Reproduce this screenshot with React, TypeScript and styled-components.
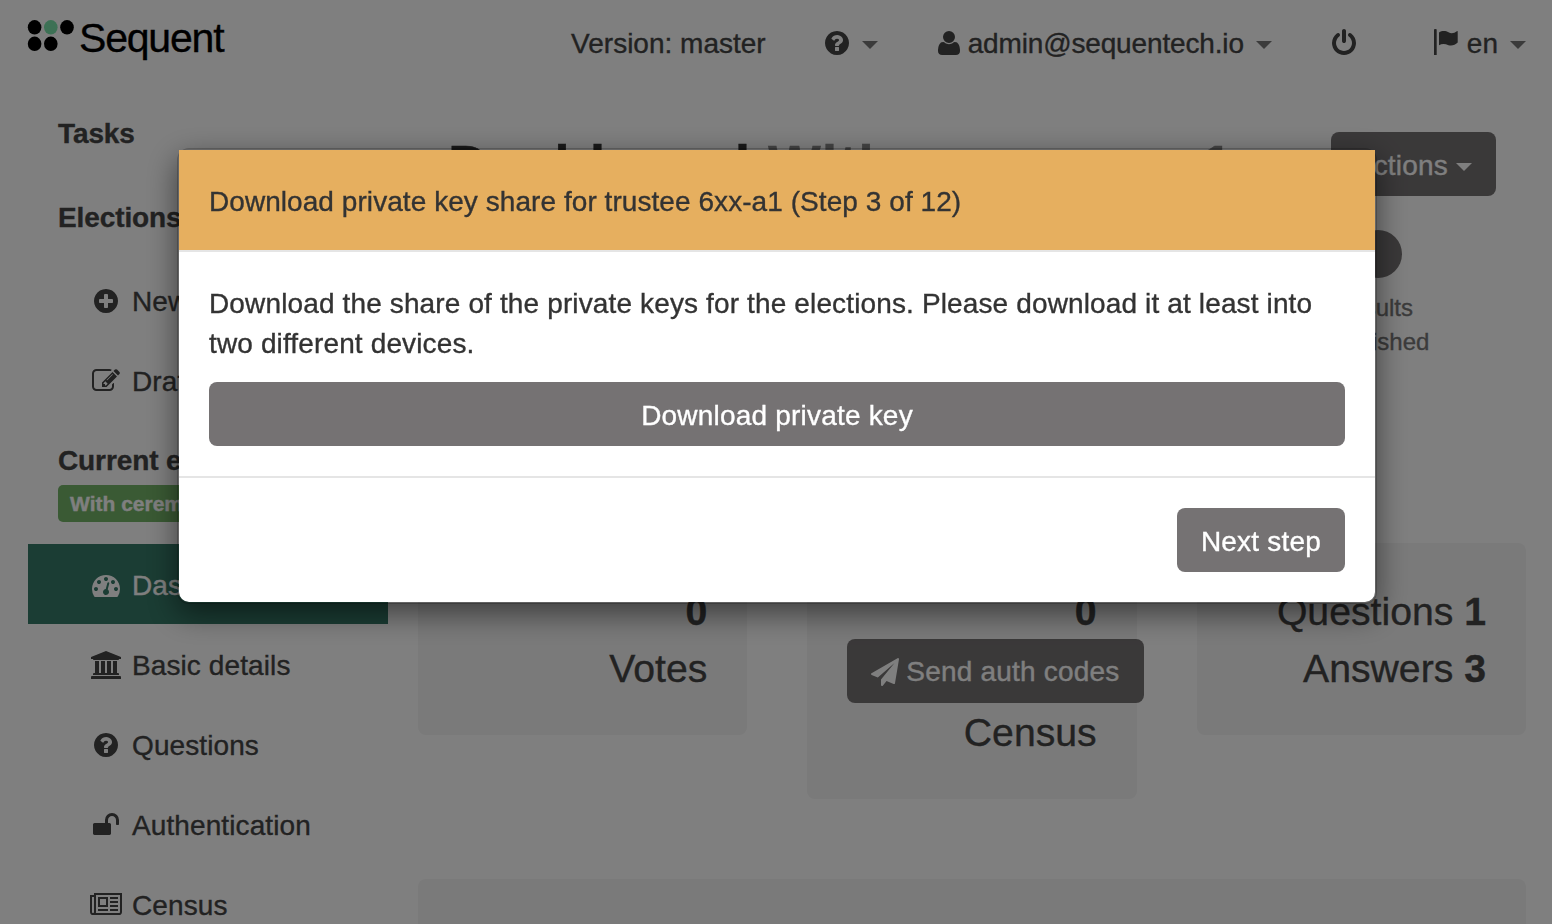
import React from "react";
import styled, { createGlobalStyle } from "styled-components";

const GlobalStyle = createGlobalStyle`
  *, *::before, *::after { box-sizing: border-box; }
  body {
    margin: 0;
    background: #fff;
    color: #444;
    font-family: "Liberation Sans", Arial, Helvetica, sans-serif;
    font-size: 28px;
    line-height: 40px;
    overflow: hidden;
    -webkit-text-stroke: 0.35px currentColor;
  }
`;

const icons = {
  question: {
    w: 1792,
    d: "M1024 1376v-192q0-14-9-23t-23-9h-192q-14 0-23 9t-9 23v192q0 14 9 23t23 9h192q14 0 23-9t9-23zm256-672q0-88-55.500-163t-138.500-116-170-41q-243 0-371 213-15 24 8 42l132 100q7 6 19 6 16 0 25-12 53-68 86-92 34-24 86-24 48 0 85.500 26t37.500 59q0 38-20 61t-68 45q-63 28-115.500 86.500t-52.500 125.500v36q0 14 9 23t23 9h192q14 0 23-9t9-23q0-19 21.500-49.500t54.500-49.500q32-18 49-28.500t46-35 44.500-48 28-60.500 12.500-81zm384 192q0 209-103 385.500t-279.500 279.500-385.500 103-385.500-103-279.500-279.500-103-385.500 103-385.500 279.500-279.500 385.500-103 385.500 103 279.500 279.500 103 385.500z",
  },
  user: {
    w: 1792,
    d: "M1600 1405q0 120-73 189.500t-194 69.500h-874q-121 0-194-69.500t-73-189.500q0-53 3.500-103.500t14-109 26.500-108.500 43-97.500 62-81 85.500-53.500 111.500-20q9 0 42 21.500t74.500 48 108 48 133.500 21.500 133.500-21.500 108-48 74.500-48 42-21.500q61 0 111.500 20t85.500 53.500 62 81 43 97.500 26.500 108.500 14 109 3.500 103.500zm-320-893q0 159-112.500 271.500t-271.500 112.500-271.500-112.500-112.500-271.500 112.500-271.500 271.500-112.500 271.500 112.500 112.500 271.500z",
  },
  power: {
    w: 1792,
    d: "M1664 896q0 156-61 298t-164 245-245 164-298 61-298-61-245-164-164-245-61-298q0-182 80.500-343t226.500-270q43-32 95.500-25t83.500 50q32 42 24.500 94.500t-49.500 84.500q-98 74-151.500 181t-53.500 228q0 104 40.500 198.500t109.500 163.500 163.500 109.500 198.500 40.500 198.500-40.500 163.500-109.500 109.500-163.500 40.500-198.500q0-121-53.500-228t-151.500-181q-42-32-49.500-84.500t24.500-94.500q31-43 84-50t95 25q146 109 226.500 270t80.500 343zm-640-768v640q0 52-38 90t-90 38-90-38-38-90v-640q0-52 38-90t90-38 90 38 38 90z",
  },
  plus: {
    w: 1792,
    d: "M1344 960v-128q0-26-19-45t-45-19h-256v-256q0-26-19-45t-45-19h-128q-26 0-45 19t-19 45v256h-256q-26 0-45 19t-19 45v128q0 26 19 45t45 19h256v256q0 26 19 45t45 19h128q26 0 45-19t19-45v-256h256q26 0 45-19t19-45zm320-64q0 209-103 385.500t-279.500 279.500-385.500 103-385.500-103-279.500-279.500-103-385.500 103-385.500 279.500-279.500 385.500-103 385.500 103 279.500 279.500 103 385.500z",
  },
  edit: {
    w: 1792,
    d: "M888 1184l116-116-152-152-116 116v56h96v96h56zm440-720q-16-16-33 1l-350 350q-17 17-1 33t33-1l350-350q17-17 1-33zm80 594v190q0 119-84.500 203.500t-203.500 84.500h-832q-119 0-203.500-84.500t-84.500-203.500v-832q0-119 84.500-203.500t203.500-84.500h832q63 0 117 25 15 7 18 23 3 17-9 29l-49 49q-14 14-32 8-23-6-45-6h-832q-66 0-113 47t-47 113v832q0 66 47 113t113 47h832q66 0 113-47t47-113v-126q0-13 9-22l64-64q15-15 35-7t20 29zm-96-738l288 288-672 672h-288v-288zm444 132l-92 92-288-288 92-92q28-28 68-28t68 28l152 152q28 28 28 68t-28 68z",
  },
  gauge: {
    w: 1792,
    d: "M384 1152q0-53-37.500-90.500t-90.500-37.500-90.500 37.500-37.500 90.500 37.500 90.500 90.500 37.500 90.500-37.500 37.500-90.500zm192-448q0-53-37.500-90.500t-90.500-37.500-90.500 37.500-37.500 90.500 37.500 90.500 90.500 37.500 90.500-37.500 37.500-90.500zm428 481l101-382q6-26-7.500-48.500t-38.500-29.500-48 6.500-30 39.500l-101 382q-60 5-107 43.500t-63 98.500q-20 77 20 146t117 89 146-20 89-117q16-60-6-117t-72-91zm660-33q0-53-37.500-90.500t-90.500-37.500-90.500 37.500-37.500 90.500 37.500 90.500 90.500 37.500 90.500-37.500 37.500-90.500zm-640-640q0-53-37.500-90.500t-90.500-37.500-90.500 37.500-37.500 90.500 37.500 90.500 90.500 37.500 90.500-37.500 37.500-90.500zm448 192q0-53-37.500-90.500t-90.500-37.500-90.500 37.500-37.500 90.500 37.500 90.500 90.500 37.500 90.500-37.500 37.500-90.500zm320 448q0 261-141 483-19 29-54 29h-1402q-35 0-54-29-141-221-141-483 0-182 71-348t191-286 286-191 348-71 348 71 286 191 191 286 71 348z",
  },
  bank: {
    w: 1920,
    d: "M960 0l960 384v128h-128q0 26-20.500 45t-48.500 19h-1526q-28 0-48.500-19t-20.500-45h-128v-128zm-704 640h256v768h128v-768h256v768h128v-768h256v768h128v-768h256v768h59q28 0 48.500 19t20.500 45v64h-1664v-64q0-26 20.500-45t48.500-19h59v-768zm1595 960q28 0 48.500 19t20.500 45v128h-1920v-128q0-26 20.500-45t48.500-19h1782z",
  },
  unlock: {
    w: 1792,
    d: "M1728 576v256q0 26-19 45t-45 19h-64q-26 0-45-19t-19-45v-256q0-106-75-181t-181-75-181 75-75 181v192h96q40 0 68 28t28 68v576q0 40-28 68t-68 28h-960q-40 0-68-28t-28-68v-576q0-40 28-68t68-28h672v-192q0-185 131.500-316.500t316.500-131.500 316.500 131.500 131.500 316.500z",
  },
  news: {
    w: 2048,
    d: "M1024 512h-384v384h384v-384zm128 640v128h-640v-128h640zm0-768v640h-640v-640h640zm640 768v128h-512v-128h512zm0-256v128h-512v-128h512zm0-256v128h-512v-128h512zm0-256v128h-512v-128h512zm-1536 960v-960h-128v960q0 26 19 45t45 19 45-19 19-45zm1664 0v-1088h-1536v1088q0 33-11 64h1483q26 0 45-19t19-45zm128-1216v1216q0 80-56 136t-136 56h-1664q-80 0-136-56t-56-136v-1088h256v-128h1792z",
  },
  plane: {
    w: 1792,
    d: "M1764 11q33 24 27 64l-256 1536q-5 29-32 45-14 8-31 8-11 0-24-5l-453-185-242 295q-18 23-49 23-13 0-22-4-19-7-30.500-23.500t-11.500-36.500v-349l864-1059-1069 925-395-162q-37-14-40-55-2-40 32-59l1664-960q15-9 32-9 20 0 36 11z",
  },
};

type IconName = keyof typeof icons;

const Glyph = styled.svg`
  display: block;
  flex: none;
  fill: currentColor;
`;

const Icon = ({ name }: { name: IconName }) => (
  <Glyph width={icons[name].w / 64} height={28} viewBox={`0 0 ${icons[name].w} 1792`} aria-hidden>
    <path d={icons[name].d} />
  </Glyph>
);

const FlagIcon = () => (
  <Glyph width={24} height={28} viewBox="0 0 24 28" aria-hidden>
    <path d="M0 0.6Q0 0 1.350 0Q2.700 0 2.700 0.600V26H0Z" />
    <path d="M5 3.500C8 1.300 12 1.700 14.500 3.300C17.500 5 20.500 4 22.800 2.200Q23.700 1.500 23.700 2.500V13.600C21 16 18 17.300 14.500 16.200C11 14.600 8 14.300 5 16.300Z" />
  </Glyph>
);

const Page = styled.div`
  height: 924px;
  overflow: hidden;
`;

const Navbar = styled.header`
  display: flex;
  align-items: flex-start;
  height: 93px;
  padding: 18px 26px 0 27px;
`;

const Logo = styled.div`
  display: flex;
  color: #000;
  font-size: 41px;
  letter-spacing: -1.2px;
  margin-right: auto;
`;

const LogoDots = styled.svg`
  display: block;
  margin-right: 4px;
`;

const NavItem = styled.div<{ $before?: number; $gap?: number; $tracking?: number }>`
  display: flex;
  align-items: center;
  height: 40px;
  margin-top: 6px;
  margin-left: ${(p) => p.$before ?? 0}px;
  gap: ${(p) => p.$gap ?? 0}px;
  letter-spacing: ${(p) => p.$tracking ?? 0}px;
  white-space: nowrap;

  > svg { margin-bottom: 2px; }
`;

const Caret = styled.span<{ $light?: boolean; $space?: number }>`
  width: 0;
  height: 0;
  margin-left: ${(p) => p.$space ?? 12}px;
  margin-top: 2px;
  border: 8px solid transparent;
  border-top-color: ${(p) => (p.$light ? "#fff" : "#777")};
  border-bottom: 0;
`;

const Columns = styled.div`
  display: flex;
  padding: 0 26px 0 28px;
`;

const Sidebar = styled.nav`
  width: 360px;
  margin-right: 30px;
  padding-top: 21px;
`;

const SideHeading = styled.h2<{ $below: number }>`
  margin: 0 0 ${(p) => p.$below}px;
  padding-left: 30px;
  font-size: 28px;
  line-height: 40px;
  letter-spacing: -0.1px;
  white-space: nowrap;
`;

const SideList = styled.div`
  display: flex;
  flex-direction: column;
  margin-bottom: 20px;
`;

const SideItem = styled.div<{ $active?: boolean; $low?: boolean }>`
  display: flex;
  align-items: center;
  height: 80px;
  padding-left: 60px;
  padding-top: ${(p) => (p.$low ? 2 : 0)}px;
  gap: 8px;
  background: ${(p) => (p.$active ? "#367a68" : "transparent")};
  color: ${(p) => (p.$active ? "#fff" : "inherit")};
`;

const SideLabel = styled.span`
  padding-top: 2px;
  letter-spacing: 0.1px;
`;

const IconSlot = styled.span`
  display: flex;
  justify-content: center;
  width: 36px;
`;

const ElectionBadge = styled.div`
  width: max-content;
  height: 37px;
  margin: 0 0 22px 30px;
  padding: 0 12px;
  border-radius: 5px;
  background: #74b468;
  color: #fff;
  font-size: 21px;
  font-weight: 700;
  line-height: 37px;
`;

const Content = styled.main`
  flex: 1;
  padding-top: 39px;
`;

const TitleRow = styled.div`
  display: flex;
  align-items: center;
  justify-content: space-between;
  height: 64px;
  padding: 0 30px;
`;

const Title = styled.h1`
  margin: 0;
  padding-top: 2px;
  font-size: 56px;
  line-height: 62px;
  letter-spacing: 1.2px;
  white-space: nowrap;
  color: #333;
`;

const TitleName = styled.span`
  color: #888;
`;

const Button = styled.button<{ $wide?: boolean }>`
  display: flex;
  align-items: center;
  justify-content: center;
  width: ${(p) => (p.$wide ? "100%" : "max-content")};
  height: 64px;
  padding: 3px 24px 0;
  gap: 7px;
  border: 0;
  border-radius: 8px;
  background: #757273;
  color: #fff;
  font: inherit;
  letter-spacing: 0.2px;
  white-space: nowrap;
`;

const Progress = styled.div`
  display: flex;
  justify-content: flex-end;
  height: 313px;
  margin-top: 34px;
  padding-right: 88px;
`;

const Stage = styled.div`
  display: flex;
  flex-direction: column;
  align-items: center;
  width: 120px;
  color: #777;
  font-size: 24px;
  line-height: 34px;
`;

const StageDot = styled.span`
  width: 48px;
  height: 48px;
  margin-bottom: 13px;
  border-radius: 50%;
  background: #757273;
`;

const StageLine = styled.span<{ $inset?: number }>`
  padding-right: ${(p) => p.$inset ?? 0}px;
`;

const Cards = styled.div`
  display: grid;
  grid-template-columns: repeat(3, minmax(0, 1fr));
  align-items: start;
  gap: 60px;
  margin-bottom: 80px;
`;

const Card = styled.section`
  padding: 40px 40px 38px;
  border-radius: 8px;
  background: #f4f4f4;
  font-size: 39.2px;
  line-height: 57px;
  text-align: right;
`;

const CardButton = styled(Button)`
  margin: -1px 0 1px;
  padding-top: 1px;
  font-size: 28px;
`;

const Panel = styled.section`
  height: 200px;
  border-radius: 8px;
  background: #f4f4f4;
`;

const Backdrop = styled.div`
  position: fixed;
  inset: 0;
  padding: 148px 175px 0 177px;
  background: rgba(0, 0, 0, 0.5);
`;

const Dialog = styled.div`
  border: 2px solid rgba(0, 0, 0, 0.2);
  border-radius: 12px;
  background: #fff;
  background-clip: padding-box;
  box-shadow: 0 10px 30px rgba(0, 0, 0, 0.5);
  color: #333;
`;

const DialogHeader = styled.div`
  height: 102px;
  padding: 32px 30px 0;
  border-bottom: 2px solid #e5e5e5;
  background: #e6af5f;
  letter-spacing: 0.06px;
`;

const DialogBody = styled.div`
  padding: 32px 30px 30px;
`;

const DialogText = styled.p`
  margin: 0 0 18px;
  letter-spacing: 0.135px;
`;

const DialogFooter = styled.div`
  display: flex;
  justify-content: flex-end;
  padding: 30px;
  border-top: 2px solid #e5e5e5;
`;

type SideLinkProps = { icon: IconName; label: string; active?: boolean; low?: boolean };

const SideLink = ({ icon, label, active, low }: SideLinkProps) => (
  <SideItem $active={active} $low={low}>
    <IconSlot>
      <Icon name={icon} />
    </IconSlot>
    <SideLabel>{label}</SideLabel>
  </SideItem>
);

export default function App() {
  return (
    <>
      <GlobalStyle />
      <Page>
        <Navbar>
          <Logo>
            <LogoDots width="48" height="36" viewBox="0 0 48 36" aria-hidden>
              <ellipse cx="7.600" cy="9.300" rx="6.800" ry="7.200" />
              <ellipse cx="23.800" cy="9.300" rx="6.800" ry="7.200" fill="#7be3ab" />
              <ellipse cx="40" cy="9.300" rx="6.800" ry="7.200" />
              <ellipse cx="7.600" cy="25.800" rx="6.800" ry="7.200" />
              <ellipse cx="23.800" cy="25.800" rx="6.800" ry="7.200" />
            </LogoDots>
            Sequent
          </Logo>
          <NavItem>Version: master</NavItem>
          <NavItem $before={57}>
            <Icon name="question" />
            <Caret $space={11} />
          </NavItem>
          <NavItem $before={57} $gap={5} $tracking={-0.15}>
            <Icon name="user" />
            admin@sequentech.io
            <Caret $space={7} />
          </NavItem>
          <NavItem $before={58}>
            <Icon name="power" />
          </NavItem>
          <NavItem $before={76}>
            <FlagIcon />
          </NavItem>
          <NavItem $before={9}>
            en
            <Caret />
          </NavItem>
        </Navbar>
        <Columns>
          <Sidebar>
            <SideHeading $below={44}>Tasks</SideHeading>
            <SideHeading $below={23}>Elections</SideHeading>
            <SideList>
              <SideLink icon="plus" label="New" />
              <SideLink icon="edit" label="Drafts" />
            </SideList>
            <SideHeading $below={4}>Current election</SideHeading>
            <ElectionBadge>With ceremony 1</ElectionBadge>
            <SideList>
              <SideLink icon="gauge" label="Dashboard" active low />
              <SideLink icon="bank" label="Basic details" low />
              <SideLink icon="question" label="Questions" low />
              <SideLink icon="unlock" label="Authentication" low />
              <SideLink icon="news" label="Census" low />
            </SideList>
          </Sidebar>
          <Content>
            <TitleRow>
              <Title>
                Dashboard <TitleName>With ceremony 1</TitleName>
              </Title>
              <Button>
                Actions
                <Caret $light $space={1} />
              </Button>
            </TitleRow>
            <Progress>
              <Stage>
                <StageDot />
                <StageLine $inset={10}>Results</StageLine>
                <StageLine>published</StageLine>
              </Stage>
            </Progress>
            <Cards>
              <Card>
                <b>0</b>
                <br />
                Votes
              </Card>
              <Card>
                <b>0</b>
                <CardButton>
                  <Icon name="plane" />
                  Send auth codes
                </CardButton>
                Census
              </Card>
              <Card>
                Questions <b>1</b>
                <br />
                Answers <b>3</b>
              </Card>
            </Cards>
            <Panel />
          </Content>
        </Columns>
      </Page>
      <Backdrop>
        <Dialog role="dialog">
          <DialogHeader>Download private key share for trustee 6xx-a1 (Step 3 of 12)</DialogHeader>
          <DialogBody>
            <DialogText>
              Download the share of the private keys for the elections. Please download it at least into two
              different devices.
            </DialogText>
            <Button $wide>Download private key</Button>
          </DialogBody>
          <DialogFooter>
            <Button>Next step</Button>
          </DialogFooter>
        </Dialog>
      </Backdrop>
    </>
  );
}
